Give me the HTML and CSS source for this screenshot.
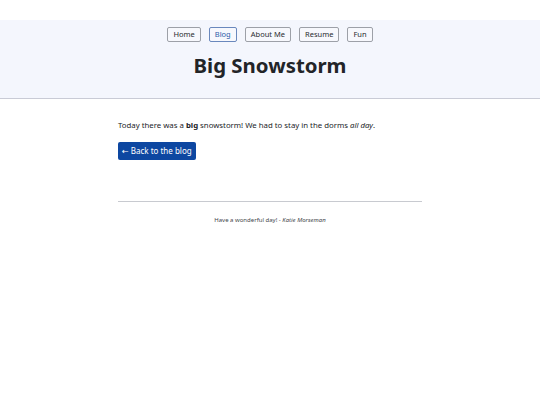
FILE: index.html
```html
<!DOCTYPE html>
<html lang="en">
<head>
<meta charset="utf-8">
<title>Big Snowstorm</title>
<link rel="stylesheet" href="styles.css">
</head>
<body>
<header class="site-header">
  <nav class="nav">
    <a class="nav-btn" href="#">Home</a>
    <a class="nav-btn active" href="#">Blog</a>
    <a class="nav-btn" href="#">About Me</a>
    <a class="nav-btn" href="#">Resume</a>
    <a class="nav-btn" href="#">Fun</a>
  </nav>
  <h1 class="title">Big Snowstorm</h1>
</header>
<main class="content">
  <p class="post">Today there was a <strong>big</strong> snowstorm! We had to stay in the dorms <em>all day</em>.</p>
  <a class="back-btn" href="#">&larr; Back to the blog</a>
  <hr class="rule">
  <footer class="footer">Have a wonderful day! - <em>Katie Morseman</em></footer>
</main>
</body>
</html>
```

FILE: styles.css
```css
html, body {
  margin: 0;
  padding: 0;
  background: #ffffff;
}
body {
  font-family: "Noto Sans", "DejaVu Sans", sans-serif;
  color: #222428;
  padding-top: 20px;
}
.site-header {
  background: #f4f6fd;
  border-bottom: 1px solid #c9cbd6;
  padding: 7px 0 19px;
  text-align: center;
}
.nav {
  display: flex;
  justify-content: center;
  gap: 8px;
}
.nav-btn {
  display: inline-block;
  font-size: 7.5px;
  line-height: 13px;
  padding: 0 5px;
  border: 1px solid #9da0a8;
  border-radius: 2px;
  color: #2a2c30;
  text-decoration: none;
  background: #f7f8fd;
}
.nav-btn.active {
  color: #2d5aa8;
  border-color: #6a88bd;
}
.title {
  margin: 9px 0 0;
  font-size: 20.4px;
  line-height: 28px;
  font-weight: 700;
  color: #222428;
}
.content {
  width: 304px;
  margin: 0 auto;
  padding-top: 19px;
}
.post {
  margin: 0 0 5px;
  font-size: 7.8px;
  line-height: 14px;
}
.back-btn {
  display: inline-block;
  background: #0d47a1;
  color: #ffffff;
  text-decoration: none;
  font-size: 8px;
  line-height: 18px;
  padding: 0 4px;
  border-radius: 2px;
}
.rule {
  margin: 41px 0 0;
  border: 0;
  border-top: 1px solid #c8cad0;
}
.footer {
  margin-top: 14px;
  text-align: center;
  font-size: 6px;
  color: #44464c;
}
```
